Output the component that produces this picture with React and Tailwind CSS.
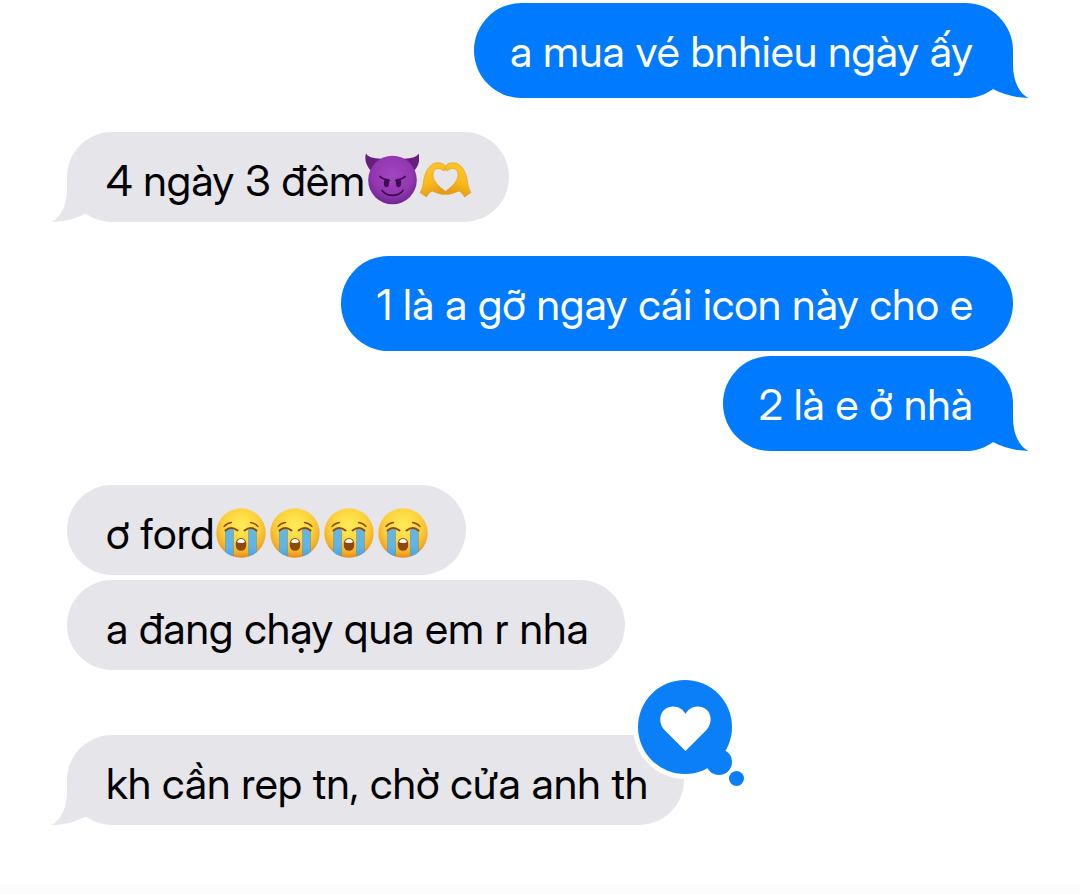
import { useId } from 'react';
import clsx from 'clsx';

const messages = [
  { id: 1, from: 'me', text: 'a mua vé bnhieu ngày ấy', tail: true, gap: 'mt-[3px]' },
  { id: 2, from: 'them', text: '4 ngày 3 đêm', emojis: ['devil', 'hands'], tail: true, gap: 'mt-[34px]' },
  { id: 3, from: 'me', text: '1 là a gỡ ngay cái icon này cho e', gap: 'mt-[34px]' },
  { id: 4, from: 'me', text: '2 là e ở nhà', tail: true, gap: 'mt-[5px]' },
  { id: 5, from: 'them', text: 'ơ ford', emojis: ['cry', 'cry', 'cry', 'cry'], gap: 'mt-[34px]' },
  { id: 6, from: 'them', text: 'a đang chạy qua em r nha', gap: 'mt-[5px]' },
  { id: 7, from: 'them', text: 'kh cần rep tn, chờ cửa anh th', tail: true, loved: true, gap: 'mt-[65px]' },
];

function DevilEmoji() {
  const id = useId();
  return (
    <svg viewBox="0 0 54 54" className="size-[54px] shrink-0" role="img" aria-label="smiling face with horns">
      <defs>
        <radialGradient id={id} cx="0.5" cy="0.4" r="0.6">
          <stop offset="0" stopColor="#a247c0" />
          <stop offset="0.7" stopColor="#9136b0" />
          <stop offset="1" stopColor="#6f2590" />
        </radialGradient>
      </defs>
      <path d="M1 0.5C4 5.500 11 5 19 6L6 18C1.500 13 -1 7 1 0.5Z" fill="#64207c" />
      <path d="M53.500 0.500C51 5.500 44 5 36 6L49 18C53.500 13 55.500 7 53.500 0.500Z" fill="#64207c" />
      <circle cx="27.500" cy="27" r="24.300" fill={`url(#${id})`} />
      <g fill="#3d0b50">
        <ellipse cx="21.500" cy="30" rx="2.600" ry="4.200" />
        <ellipse cx="33.500" cy="30" rx="2.600" ry="4.200" />
      </g>
      <g fill="none" stroke="#3d0b50" strokeWidth="1.700" strokeLinecap="round">
        <path d="M15 23.500C17 26 21 26.500 24.500 27.500" />
        <path d="M40 23.500C38 26 34 26.500 30.500 27.500" />
        <path d="M17 37.500C22 44 33 44 38 37.500" />
      </g>
    </svg>
  );
}

function HandsEmoji() {
  const id = useId();
  const hand =
    'M1 39.500C4 35 4 31 5 26C6 20 9 14 14 11C17 9 25 9.500 26 13C27 16.500 26 18.500 24 17.500C20 13.500 14.500 15.500 14 21C13.500 27 19 33 25.500 37.500C28 39.500 27 42 24.500 41.500C20 41 16 39 13 38C11 39 9 41 7.500 44Z';
  return (
    <svg viewBox="0 0 54 54" className="size-[54px] shrink-0" role="img" aria-label="heart hands">
      <defs>
        <linearGradient id={id} x1="0" y1="0" x2="0.3" y2="1">
          <stop offset="0" stopColor="#ffc72c" />
          <stop offset="0.6" stopColor="#f9bc1b" />
          <stop offset="1" stopColor="#e69c17" />
        </linearGradient>
      </defs>
      {[undefined, 'translate(53 0) scale(-1 1)'].map((flip) => (
        <path
          key={flip ?? 'left'}
          transform={flip}
          d={hand}
          fill={`url(#${id})`}
          stroke="#dc9716"
          strokeWidth="0.6"
          strokeLinejoin="round"
        />
      ))}
    </svg>
  );
}

function CryEmoji() {
  const id = useId();
  return (
    <svg viewBox="0 0 54 54" className="size-[54px] shrink-0" role="img" aria-label="loudly crying face">
      <defs>
        <radialGradient id={`${id}face`} cx="0.5" cy="0.35" r="0.65">
          <stop offset="0" stopColor="#ffec58" />
          <stop offset="0.55" stopColor="#fdd33c" />
          <stop offset="0.85" stopColor="#f5ac26" />
          <stop offset="1" stopColor="#e68a18" />
        </radialGradient>
        <linearGradient id={`${id}tear`} x1="0" y1="0" x2="0" y2="1">
          <stop offset="0" stopColor="#69b5dd" />
          <stop offset="0.6" stopColor="#5eb4ea" />
          <stop offset="1" stopColor="#3f9be0" />
        </linearGradient>
        <clipPath id={`${id}clip`}>
          <circle cx="27" cy="27" r="24.700" />
        </clipPath>
      </defs>
      <circle cx="27" cy="27" r="24.700" fill={`url(#${id}face)`} />
      <g clipPath={`url(#${id}clip)`} fill={`url(#${id}tear)`} stroke="#6c9a87" strokeWidth="0.6">
        <path d="M11.500 24Q16 20 19.500 24V54H11.500Z" />
        <path d="M34.500 24Q38 20 42.500 24V54H34.500Z" />
      </g>
      <g fill="none" stroke="#8a4b0b" strokeLinecap="round">
        <path d="M10 20.500Q13 17 17.500 16.500M44 20.500Q41 17 36.500 16.500" strokeWidth="1.300" />
        <path d="M11.500 24.500Q17 19.500 23.500 24.500M42.500 24.500Q37 19.500 30.500 24.500" strokeWidth="2" />
      </g>
      <rect x="21.800" y="32" width="10.400" height="12.800" rx="5.200" fill="#8a4a10" />
      <path d="M23 36Q24 33 27 33T31 36Q30 37 27 37T23 36Z" fill="#fff" />
    </svg>
  );
}

const emojiMap = {
  devil: DevilEmoji,
  hands: HandsEmoji,
  cry: CryEmoji,
};

function Tail({ mine }) {
  return (
    <svg
      viewBox="0 0 51 50"
      aria-hidden="true"
      className={clsx(
        'absolute bottom-0 w-[51px] h-[50px] fill-current',
        mine ? '-right-[16px] text-[#007aff]' : '-left-[16px] -scale-x-100 text-[#e5e5ea]'
      )}
    >
      <path d="M35 4V17C35 31 40 45 50.500 50C37 50 25 46 15 41L8 20Z" />
    </svg>
  );
}

function LoveReaction() {
  return (
    <button type="button" aria-label="Loved" className="absolute -top-[61px] -right-[61px] cursor-pointer">
      <svg viewBox="0 0 113 113" className="block size-[113px]" aria-hidden="true">
        <circle cx="53" cy="53" r="52" fill="#fff" />
        <g fill="#0a7ff8">
          <circle cx="53" cy="53" r="47" />
          <circle cx="87" cy="88" r="13" />
          <circle cx="104.500" cy="104.500" r="7.500" />
        </g>
        <path
          d="M53.500 77L32.500 56C24.500 47 28.500 32.500 41 32.500C47 32.500 51.500 36 53.500 40C55.500 36 60 32.500 66 32.500C78.500 32.500 82.500 47 74.500 56Z"
          fill="#fff"
        />
      </svg>
    </button>
  );
}

function Message({ from, text, emojis = [], tail, loved, gap }) {
  const mine = from === 'me';

  return (
    <li
      className={clsx(
        'relative flex items-center rounded-[48px] text-[43px] leading-[54px] whitespace-nowrap',
        mine
          ? 'self-end h-[95px] pl-[36px] pr-[40px] bg-[#007aff] text-white'
          : 'self-start h-[90px] pl-[39px] pr-[36px] pt-[6px] bg-[#e5e5ea] text-black',
        gap
      )}
    >
      {tail && <Tail mine={mine} />}
      <span className="relative">{text}</span>
      {emojis.map((name, i) => {
        const Emoji = emojiMap[name];
        return <Emoji key={i} />;
      })}
      {loved && <LoveReaction />}
    </li>
  );
}

export default function App() {
  return (
    <div className="flex flex-col min-h-screen overflow-hidden bg-white font-['Inter_Display','Inter',sans-serif] [font-variation-settings:'opsz'_32]">
      <ul className="flex flex-col pl-[67px] pr-[67px]">
        {messages.map((message) => (
          <Message key={message.id} {...message} />
        ))}
      </ul>
      {/* Top edge of the input bar */}
      <footer className="mt-auto h-[10px] bg-[#fcfcfc]" />
    </div>
  );
}
